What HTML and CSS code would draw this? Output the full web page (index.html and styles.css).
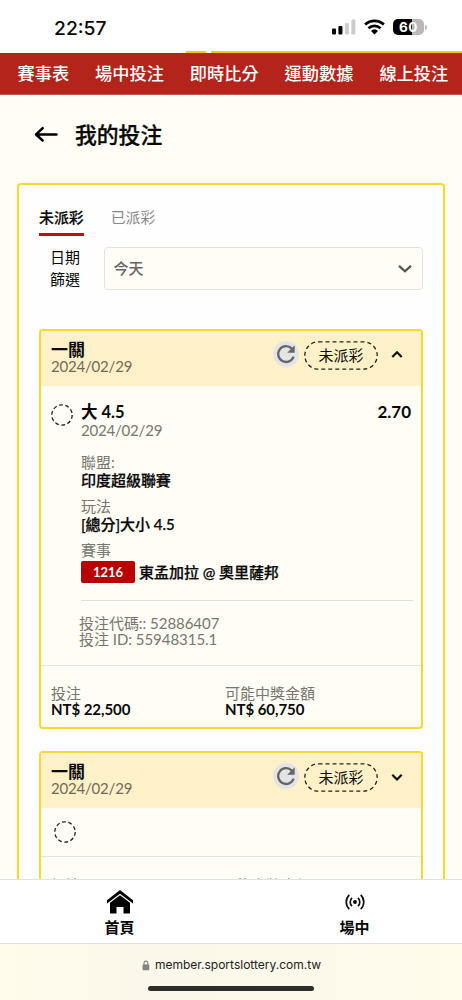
FILE: index.html
```html
<!DOCTYPE html>
<html lang="zh-Hant">
<head>
<meta charset="utf-8">
<title>我的投注</title>
<link rel="stylesheet" href="styles.css">
</head>
<body>
<div class="app">
  <header class="status">
    <span class="clock">22:57</span>
    <div class="status-icons">
      <svg class="signal" width="24" height="16" viewBox="0 0 24 16"><rect x="0" y="9.5" width="4" height="6" rx="1"/><rect x="6.4" y="7" width="4" height="8.5" rx="1"/><g fill="#ccc"><rect x="12.9" y="4" width="4" height="11.5" rx="1"/><rect x="19.4" y="0.5" width="4" height="15" rx="1"/></g></svg>
      <svg class="wifi" width="21" height="16" viewBox="0 0 21 16"><g fill="none" stroke="#000" stroke-width="2.7"><path d="M1.1 5.6a13.7 13.7 0 0 1 18.8 0"/><path d="M4.5 9.2a8.8 8.8 0 0 1 12 0"/></g><path d="M7 11.9a5.2 5.2 0 0 1 7 0L10.5 15.4z"/></svg>
      <div class="battery"><span>60</span></div><i class="battery-tip"></i>
    </div>
  </header>
  <div class="trim"><i></i><i></i></div>
  <nav class="nav"><a>賽事表</a><a>場中投注</a><a>即時比分</a><a>運動數據</a><a>線上投注</a></nav>
  <main class="main">
    <div class="title">
      <svg width="24" height="18" viewBox="0 0 24 18" fill="none" stroke="#000" stroke-width="2.5" stroke-linecap="round" stroke-linejoin="round"><path d="M22.5 8.500H2.500M8.700 2.200L2 8.500l6.700 6"/></svg>
      <h1>我的投注</h1>
    </div>
    <section class="panel">
      <div class="tabs"><span class="tab active">未派彩</span><span class="tab">已派彩</span></div>
      <div class="filter">
        <div class="filter-label">日期<br>篩選</div>
        <div class="select"><span>今天</span><svg width="14" height="9" viewBox="0 0 14 9" fill="none" stroke="#555" stroke-width="2.3"><path d="M1 1.8l6 5.5 6-5.5"/></svg></div>
      </div>
      <article class="card">
        <div class="card-head">
          <div class="head-text"><b>一關</b><span>2024/02/29</span></div>
          <svg class="refresh" width="26" height="26" viewBox="0 0 26 26"><circle cx="13" cy="13" r="13" fill="#e3e4e6"/><path d="M18.8 7.6A7.9 7.9 0 1 0 20.6 15.6" fill="none" stroke="#666" stroke-width="2.3"/><path d="M21.7 4.2v7.5h-7.5z" fill="#666"/></svg>
          <div class="pill"><svg width="74" height="29" viewBox="0 0 74 29"><rect x=".8" y=".8" width="72.4" height="27.4" rx="13.7"/></svg><span>未派彩</span></div>
          <svg class="chev" width="12" height="8" viewBox="0 0 12 8"><path d="M1.3 6L6 1.300 10.700 6"/></svg>
        </div>
        <div class="bet">
          <svg class="ring" width="22" height="22" viewBox="0 0 22 22"><circle cx="11" cy="11" r="10.2"/></svg>
          <div class="bet-info">
            <div class="pick"><b>大 4.5</b><b class="odds">2.70</b></div>
            <div class="date">2024/02/29</div>
            <dl>
              <dt>聯盟:</dt><dd>印度超級聯賽</dd>
              <dt>玩法</dt><dd>[總分]大小 4.5</dd>
              <dt>賽事</dt><dd class="match"><span class="code">1216</span><span>東孟加拉 @ 奧里薩邦</span></dd>
            </dl>
            <div class="ids"><div>投注代碼:: 52886407</div><div>投注 ID: 55948315.1</div></div>
          </div>
        </div>
        <div class="card-foot">
          <div class="stake"><span>投注</span><b>NT$ 22,500</b></div>
          <div><span>可能中獎金額</span><b>NT$ 60,750</b></div>
        </div>
      </article>
      <article class="card">
        <div class="card-head">
          <div class="head-text"><b>一關</b><span>2024/02/29</span></div>
          <svg class="refresh" width="26" height="26" viewBox="0 0 26 26"><circle cx="13" cy="13" r="13" fill="#e3e4e6"/><path d="M18.8 7.6A7.9 7.9 0 1 0 20.6 15.6" fill="none" stroke="#666" stroke-width="2.3"/><path d="M21.7 4.2v7.5h-7.5z" fill="#666"/></svg>
          <div class="pill"><svg width="74" height="29" viewBox="0 0 74 29"><rect x=".8" y=".8" width="72.4" height="27.4" rx="13.7"/></svg><span>未派彩</span></div>
          <svg class="chev" width="12" height="8" viewBox="0 0 12 8"><path d="M1.3 1.8L6 6.500l4.7-4.7"/></svg>
        </div>
        <div class="bet-short"><svg class="ring" width="22" height="22" viewBox="0 0 22 22"><circle cx="11" cy="11" r="10.2"/></svg></div>
        <div class="card-foot short">
          <div class="stake"><span>投注</span></div>
          <div><span>可能中獎金額</span></div>
        </div>
      </article>
    </section>
  </main>
  <footer class="tabbar">
    <div class="tabitem"><svg width="26" height="24" viewBox="0 0 26 24"><path d="M0 10.3L13 0l13 10.3v3.2L13 3.7 0 13.500z"/><path d="M3 12.800L13 5.300l10 7.500V23.600h-6.500v-6.700h-7v6.700H3z"/></svg><span>首頁</span></div>
    <div class="tabitem"><svg class="live" width="22" height="24" viewBox="0 0 22 24"><g fill="none" stroke="#111" stroke-width="1.7"><path d="M5.300 4.800a10 10 0 0 0 0 14.400M16.700 4.800a10 10 0 0 1 0 14.400M8 7.800a5.800 5.800 0 0 0 0 8.400M14 7.800a5.800 5.800 0 0 1 0 8.400"/></g><circle cx="11" cy="12" r="1.900"/></svg><span>場中</span></div>
  </footer>
  <div class="browser">
    <div class="address"><svg width="8" height="11" viewBox="0 0 8 11"><rect x=".5" y="4.500" width="6.800" height="5.800" rx="1" fill="#858580"/><path d="M2 5V3a1.900 1.900 0 0 1 3.800 0v2" fill="none" stroke="#858580" stroke-width="1.100"/></svg><span>member.sportslottery.com.tw</span></div>
    <i class="homebar"></i>
  </div>
</div>
</body>
</html>
```
FILE: styles.css
```css
* { box-sizing: border-box; }
body { margin: 0; background: #fffdf5; color: #080808; font-family: Lato, "Noto Sans CJK TC", sans-serif; font-size: 15px; }
svg { display: block; flex: none; }
.app { width: 462px; height: 1000px; display: flex; flex-direction: column; overflow: hidden; }

.status { height: 51px; flex: none; background: #fff; display: flex; justify-content: space-between; padding: 0 35px 0 54px; }
.clock { font: 500 19.3px/56px Inter, sans-serif; }
.status-icons { display: flex; padding-top: 19px; }
.wifi { margin-left: 8px; }
.battery { width: 31px; height: 16px; margin-left: 8px; border-radius: 5px; background: linear-gradient(90deg, #000 60%, #b8b8b8 60%); color: #fff; font: 700 13.5px/16px Inter, sans-serif; text-align: center; letter-spacing: .5px; }
.battery-tip { width: 2px; height: 5px; margin: 5.500px 0 0 1px; background: #bbb; border-radius: 0 2px 2px 0; }
.trim { height: 2px; flex: none; background: #fff; display: flex; gap: 5px; padding-left: 186px; }
.trim i { width: 20px; background: #f2c81e; }
.trim i + i { flex: 1; }
.nav { height: 42px; flex: none; background: #b5241b; border-bottom: 1px solid #c6524a; color: #fff; display: flex; gap: 26px; padding-left: 17.500px; font-size: 17.200px; font-weight: 500; line-height: 41px; white-space: nowrap; }

.main { height: 784px; flex: none; overflow: hidden; }
.title { height: 88px; display: flex; padding: 0 0 8px 34px; align-items: center; gap: 17px; }
h1 { margin: 0; font-size: 21.8px; line-height: 32px; font-weight: 500; -webkit-text-stroke: .3px; }
.panel { margin: 0 17px; height: 760px; border: 2px solid #fdd72a; border-radius: 4px; background: #fefefe; padding: 20px 20px 0; }
.tabs { display: flex; gap: 27px; height: 33px; }
.tab { font-size: 14.900px; line-height: 25px; height: 31px; color: #888; }
.tab.active { color: #080808; font-weight: 500; border-bottom: 3px solid #bd1117; -webkit-text-stroke: .2px; }
.filter { display: flex; margin-top: 9px; height: 43px; }
.filter-label { width: 64.500px; padding-left: 11px; margin-top: -1px; line-height: 22px; }
.select { flex: 1; height: 43px; display: flex; align-items: center; justify-content: space-between; padding: 0 10px 0 9px; border: 1px solid #e5e2da; border-radius: 4px; background: #fffdf5; color: #666; font-weight: 500; }
.select span { line-height: 22px; padding-bottom: 2px; }

.card { margin-top: 22px; border: 2px solid #fdd72a; border-radius: 4px; background: #fffdf5; }
.filter + .card { margin-top: 39px; }
.card-head { height: 55px; background: #fff1c7; display: flex; align-items: flex-start; padding: 10px 18px 0 10px; }
.head-text { flex: 1; }
.head-text b { display: block; font-size: 17px; line-height: 17px; }
.head-text span { display: block; line-height: 17px; color: #716a59; letter-spacing: -.2px; }
.pill { width: 74px; height: 29px; margin: 0 13px 0 5px; display: grid; }
.pill svg, .pill span { grid-area: 1 / 1; }
.pill span { text-align: center; line-height: 29px; }
.pill rect { fill: none; stroke: #222; stroke-width: 1.3; stroke-dasharray: 4 3; }
.chev { margin-top: 10px; fill: none; stroke: #111; stroke-width: 2.200; }
.ring { fill: none; stroke: #222; stroke-width: 1.300; stroke-dasharray: 3.800 2.600; }
.bet { display: flex; padding: 17px 8px 0 9.500px; height: 279px; }
.bet > .ring { margin-top: 1px; }
.bet-info { flex: 1; margin-left: 8.500px; }
.pick { display: flex; justify-content: space-between; font-size: 16.500px; line-height: 18px; height: 18px; }
.odds { margin-right: 2px; font-size: 17px; }
.date { line-height: 18px; color: #77766f; letter-spacing: -.2px; }
dl { margin: 14px 0 0; padding-bottom: 17px; border-bottom: 1px solid #dfddd7; }
dt { line-height: 18px; color: #77766f; }
dd { margin: 0 0 8px; line-height: 18px; font-weight: 500; letter-spacing: -.03px; -webkit-text-stroke: .25px; }
dd.match { display: flex; gap: 4px; margin: 2px 0 0; height: 22px; line-height: 22px; }
.code { width: 54px; height: 22px; border-radius: 2px; background: #b80000; color: #fff; text-align: center; font-size: 13px; font-weight: 700; letter-spacing: 0; line-height: 22px; -webkit-text-stroke: 0; }
.ids { margin-left: -2px; padding-top: 14px; color: #77766f; line-height: 16px; letter-spacing: -.04px; }
.card-foot { height: 62px; border-top: 1px solid #e6e5df; display: flex; padding: 19px 10px 0; }
.card-foot span, .card-foot b { display: block; line-height: 16px; }
.card-foot span { color: #77766f; }
.card-foot b { letter-spacing: -.05px; }
.stake { width: 174px; }
.bet-short { height: 48px; padding: 13px; }
.card-foot.short { padding-top: 20px; }
.short .stake { width: 170px; }

.tabbar { height: 65px; flex: none; border-top: 1px solid #e2e2df; border-bottom: 1px solid #dedede; background: #fff; display: flex; padding-left: 2px; }
.tabitem { width: 235px; flex: none; display: flex; flex-direction: column; align-items: center; padding-top: 10px; font-weight: 700; font-size: 15px; line-height: 26px; }
.browser { height: 56px; flex: none; background: linear-gradient(90deg, #fffcec, #fbf7ea 30%, #fcf8ea 65%, #fffcec); display: flex; flex-direction: column; align-items: center; }
.address { display: flex; align-items: center; gap: 5px; height: 42px; padding-left: 1px; font: 12px/42px Inter, sans-serif; color: #222; }
.homebar { width: 166px; height: 5px; border-radius: 3px; background: #2d2d2b; }
```
